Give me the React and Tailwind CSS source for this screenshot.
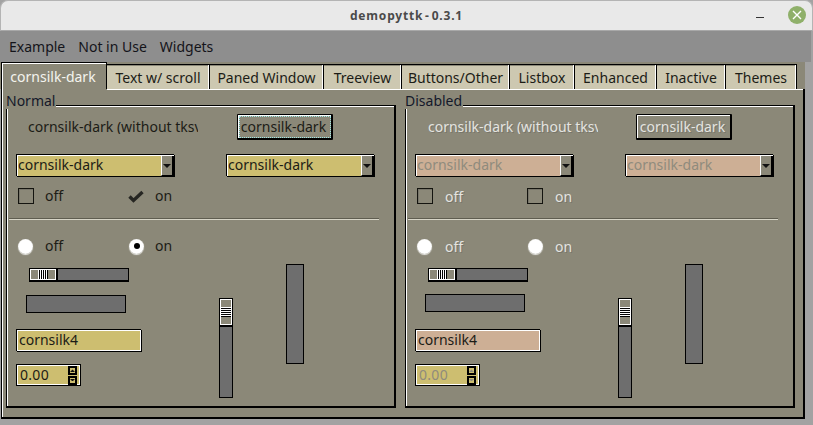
import React from "react";

const FONT = "[font-family:'Noto_Sans',sans-serif]";
const DIS = "text-[#e4e4e0] [text-shadow:1px_1px_0_#77756a]";

function Arrow({ size = 8, color = "#111" }) {
  return (
    <svg width={size} height={size / 2} viewBox="0 0 8 4">
      <path d="M0 0h8L4 4z" fill={color} />
    </svg>
  );
}

function Combo({ w, text, disabled }) {
  return (
    <div className={`flex h-[22px] border-t border-l border-black bg-white pt-px pl-px shadow-[1px_1px_0_#000]`} style={{ width: w }}>
      <div className={`flex-1 flex items-center pb-[3px] overflow-hidden ${disabled ? "bg-[#cdaf95] text-[#8f8b7d]" : "bg-[#cdbe70] text-[#1c1c16]"}`}>
        <span className="leading-none">{text}</span>
      </div>
      <div className="w-[13px] flex items-center justify-center bg-[#8b8878] border-l border-white border-r-2 border-b border-r-black border-b-black">
        <Arrow />
      </div>
    </div>
  );
}

function Check({ disabled, on, label }) {
  return (
    <div className="flex items-center h-[16px]">
      {on ? (
        <svg width="16" height="16" viewBox="0 0 16 16">
          <path d="M1.5 8.5 5.5 12.5 14.5 4" fill="none" stroke="#262622" strokeWidth="3.4" />
        </svg>
      ) : (
        <div className="w-[16px] h-[16px] border border-[#14140f] shadow-[inset_1px_1px_0_#77756a]" />
      )}
      <span className={`leading-none ${disabled ? `ml-[12px] mt-[2px] ${DIS}` : "ml-[11px] text-[#1c1c16]"}`}>{label}</span>
    </div>
  );
}

function Radio({ disabled, on, label, gap }) {
  return (
    <div className="flex items-center h-[16px]">
      <div className="w-[15px] h-[15px] rounded-full bg-[radial-gradient(circle,#fff_60%,#dcdcd8_85%)] shadow-[0_1px_1px_#e8e8e4] flex items-center justify-center">
        {on && <div className="w-[6px] h-[6px] rounded-full bg-black" />}
      </div>
      <span
        className={`leading-none ${disabled ? `mt-[2px] ${DIS}` : "text-[#1c1c16]"}`}
        style={{ marginLeft: gap + (disabled ? 1 : 0) }}
      >
        {label}
      </span>
    </div>
  );
}

function Panel({ title, disabled }) {
  return (
    <div className="relative w-[390px] h-[303px] border-t border-l border-black border-r-2 border-b-2 shadow-[inset_1px_1px_0_#fff]">
      <span className="absolute -left-px -top-[12px] bg-[#8b8878] leading-none h-[15px] pr-[1px] text-[#14182a]">{title}</span>

      {/* label + button */}
      <div className="flex items-center mt-[8px] h-[26px]">
        <div className={`w-[170px] overflow-hidden whitespace-nowrap leading-none ${disabled ? `ml-[22px] ${DIS}` : "ml-[21px] text-[#1c1c16]"}`}>
          cornsilk-dark (without tksv
        </div>
        <button className={`w-[96px] h-[26px] rounded-[1px] border-t border-l border-black border-r-2 border-b-2 shadow-[inset_1px_1px_0_#fff] flex items-center justify-center pr-[2px] ${disabled ? `ml-[38px] ${DIS}` : "ml-[39px] text-[#1c1c16] outline-1 outline-dotted outline-[#9fe8e8] -outline-offset-3"}`}>
          cornsilk-dark
        </button>
      </div>

      {/* combos */}
      <div className="flex mt-[14px] ml-[9px]">
        <Combo w={158} text="cornsilk-dark" disabled={disabled} />
        <div className="w-[52px]" />
        <Combo w={148} text="cornsilk-dark" disabled={disabled} />
      </div>

      {/* checks */}
      <div className="flex mt-[12px] ml-[11px]">
        <div className="w-[110px]"><Check label="off" disabled={disabled} /></div>
        <Check label="on" on={!disabled} disabled={disabled} />
      </div>

      <div className="mt-[14px] ml-[2px] w-[370px] h-[2px] bg-[#d8d6c8] border-t border-[#5f5d50]" />

      {/* radios */}
      <div className="flex mt-[18px] ml-[11px]">
        <div className="w-[111px]"><Radio label="off" gap={12} disabled={disabled} /></div>
        <Radio label="on" gap={11} on={!disabled} disabled={disabled} />
      </div>

      <div className="flex mt-[10px]">
        <div className="w-[212px] flex flex-col">
          {/* horizontal scale */}
          <div className="mt-[4px] ml-[22px] w-[100px] h-[14px] bg-[#6e6e6e] border border-black border-b-2 flex">
            <div className="w-[28px] h-full bg-[#8b8878] border-r-2 border-r-black shadow-[inset_0_0_0_1px_#fff] flex items-center justify-center">
              <div className="w-[10px] h-[9px] bg-[repeating-linear-gradient(90deg,#fff_0,#fff_1px,#000_1px,#000_2px)]" />
            </div>
          </div>
          {/* progress */}
          <div className={`ml-[19px] w-[100px] h-[18px] bg-[#6e6e6e] border border-black ${disabled ? "mt-[12px]" : "mt-[13px]"}`} />
          {/* entry */}
          <div className={`ml-[9px] w-[125px] h-[22px] border-t border-l border-black bg-white p-px shadow-[1px_1px_0_#000] ${disabled ? "mt-[17px]" : "mt-[16px]"}`}>
            <div className={`h-full flex items-center pl-px pb-[2px] text-[#1c1c16] ${disabled ? "bg-[#cdaf95]" : "bg-[#cdbe70]"}`}>
              <span className="leading-none">cornsilk4</span>
            </div>
          </div>
          {/* spin */}
          <div className="mt-[13px] ml-[9px] w-[65px] h-[22px] border border-black bg-white p-px">
            <div className={`h-full bg-[#cdbe70] flex items-center pl-[2px] pr-[1px] ${disabled ? "text-[#8f8b7d]" : "text-[#1c1c16]"}`}>
              <span className="flex-1 leading-none tracking-[0.3px]">0.00</span>
              <div className="flex flex-col gap-[1px] mr-[1px]">
                <div className="w-[9px] h-[9px] border-2 border-black bg-[#cdbe70] flex items-center justify-center rotate-180">
                  <Arrow size={5} color={disabled ? "#8f8b7d" : "#111"} />
                </div>
                <div className="w-[9px] h-[9px] border-2 border-black bg-[#cdbe70] flex items-center justify-center">
                  <Arrow size={5} color={disabled ? "#8f8b7d" : "#111"} />
                </div>
              </div>
            </div>
          </div>
        </div>
        {/* vertical scale */}
        <div className="mt-[34px] w-[14px] h-[100px] bg-[#6e6e6e] border border-black">
          <div className="w-full h-[28px] bg-[#8b8878] border-b-2 border-b-black shadow-[inset_0_0_0_1px_#fff] flex items-center justify-center">
            <div className="w-[10px] h-[10px] bg-[repeating-linear-gradient(180deg,#fff_0,#fff_1px,#000_1px,#000_2px)]" />
          </div>
        </div>
        {/* vertical progress */}
        <div className="ml-[53px] w-[18px] h-[100px] bg-[#6e6e6e] border border-black" />
      </div>
    </div>
  );
}

const TABS = [
  ["Text w/ scroll", 103],
  ["Paned Window", 114],
  ["Treeview", 78],
  ["Buttons/Other", 108],
  ["Listbox", 65],
  ["Enhanced", 82],
  ["Inactive", 69],
  ["Themes", 71],
];

export default function App() {
  return (
    <div className={`${FONT} w-[813px] h-[425px] overflow-hidden bg-[#a2a2a2] flex flex-col text-[14px] text-[#1c1c16]`}>
      {/* title bar */}
      <div className="relative h-[31px] shrink-0 bg-[#e9e9e9] rounded-t-[8px] border-t border-x border-[#b4b4b4] border-b border-b-[#a8a8a8] flex items-center justify-center">
        <span className="font-bold text-[12px] tracking-[0.8px] [word-spacing:-2px] text-[#4a4a4a]">demopyttk - 0.3.1</span>
        <div className="absolute right-[48px] top-[16px] w-[8px] h-[1px] bg-[#333]" />
        <div className="absolute right-[6px] top-[5px] w-[18px] h-[18px] rounded-full bg-[#8fb06a] flex items-center justify-center">
          <svg width="10" height="10" viewBox="0 0 10 10">
            <path d="M1 1l8 8M9 1l-8 8" stroke="#fff" strokeWidth="1.4" />
          </svg>
        </div>
      </div>

      {/* menu */}
      <div className="h-[31px] shrink-0 bg-[#8e8e8e] mr-[2px] flex items-center pl-[9px] text-[#14141a] gap-[13px]">
        <span>Example</span>
        <span>Not in Use</span>
        <span>Widgets</span>
      </div>

      {/* tabs */}
      <div className="h-[27px] shrink-0 w-[805px] bg-[#8b8878] flex items-end pl-[1px]">
        <div className="w-[106px] h-[27px] border-t border-l border-black border-r shadow-[inset_1px_1px_0_#fff] flex items-center justify-center pr-[2px] text-[#f4f4ee]">
          cornsilk-dark
        </div>
        {TABS.map(([t, w]) => (
          <div
            key={t}
            className="h-[25px] bg-[#cdc8b1] border-t border-black border-r flex items-center justify-center shadow-[inset_-1px_0_0_#fff,inset_0_1px_0_#8b8878]"
            style={{ width: w }}
          >
            {t}
          </div>
        ))}
      </div>

      {/* notebook pane */}
      <div className="w-[804px] ml-[1px] h-[330px] shrink-0 bg-[#8b8878] border-l border-black border-r-2 border-b-2 shadow-[inset_1px_0_0_#fff] relative">
        <div className="absolute left-0 top-0 right-0 h-px ml-[105px] bg-white" />
        <div className="flex pt-[16px] pl-[4px] gap-[9px]">
          <Panel title="Normal" />
          <Panel title="Disabled" disabled />
        </div>
      </div>
    </div>
  );
}
